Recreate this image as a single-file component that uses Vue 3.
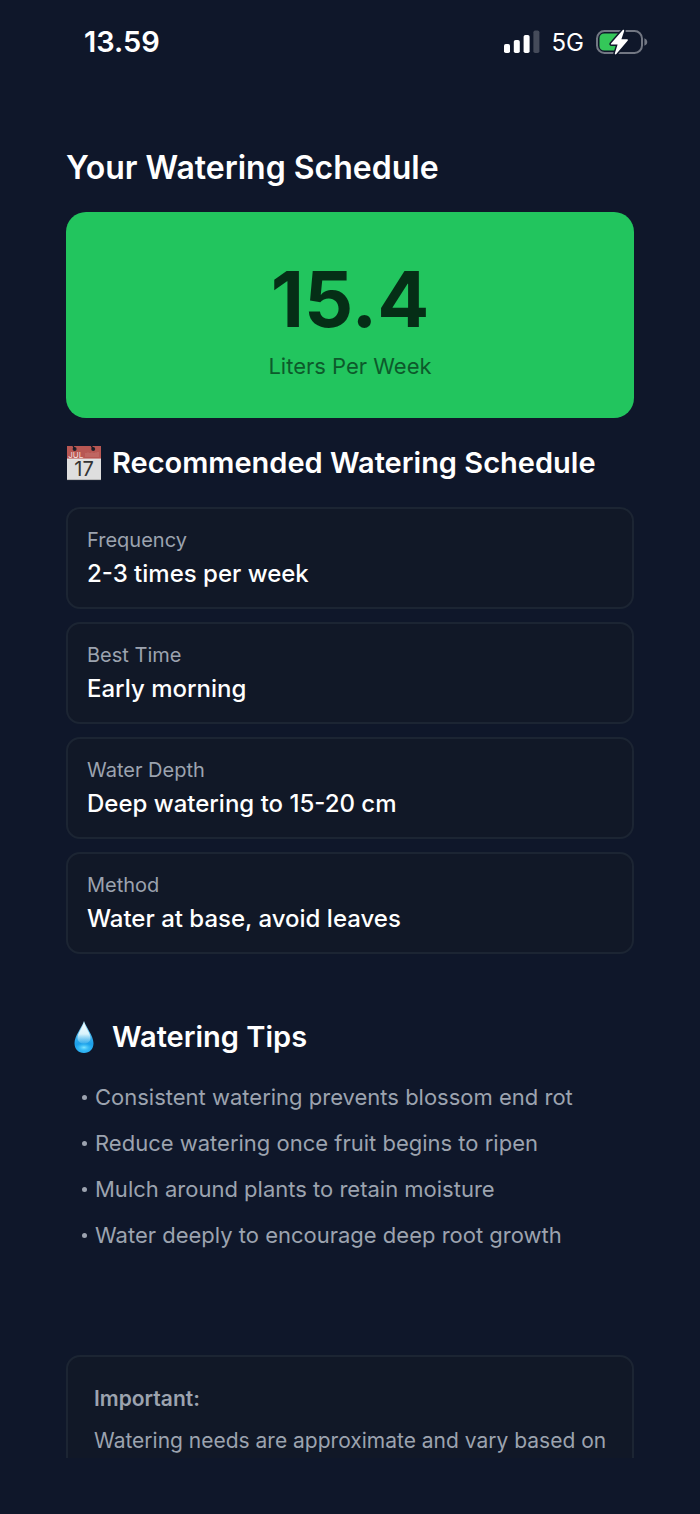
<script setup>
const amount = '15.4'

const schedule = [
  { label: 'Frequency', value: '2-3 times per week' },
  { label: 'Best Time', value: 'Early morning' },
  { label: 'Water Depth', value: 'Deep watering to 15-20 cm' },
  { label: 'Method', value: 'Water at base, avoid leaves' },
]

const tips = [
  'Consistent watering prevents blossom end rot',
  'Reduce watering once fruit begins to ripen',
  'Mulch around plants to retain moisture',
  'Water deeply to encourage deep root growth',
]
</script>

<template>
  <div class="screen">
    <header class="status">
      <time class="clock">13.59</time>
      <div class="indicators">
        <svg class="signal" width="36" height="24" viewBox="0 0 36 24" role="img" aria-label="Signal strength">
          <rect x="0" y="14" width="6" height="9" rx="1.8" fill="#fff" />
          <rect x="9.8" y="10" width="6" height="13" rx="1.8" fill="#fff" />
          <rect x="19.6" y="5" width="6" height="18" rx="1.8" fill="#fff" />
          <rect x="29.4" y="0.5" width="6" height="22.5" rx="1.8" fill="#454b5a" />
        </svg>
        <span class="network">5G</span>
        <svg class="battery" width="52" height="28" viewBox="0 0 52 28" role="img" aria-label="Battery charging">
          <rect x="1" y="3" width="45" height="22" rx="7.5" fill="none" stroke="#727783" stroke-width="2" />
          <path d="M48.4 10.3 C52.2 11.6 52.2 16.6 48.4 17.8 Z" fill="#727783" />
          <path d="M8.5 5.5 H23 V22.5 H8.5 Q3.5 22.5 3.5 17.5 V10.5 Q3.5 5.5 8.5 5.5 Z" fill="#34c759" />
          <path d="M27 1.8 L15 15.4 Q14.4 16.6 15.7 16.6 H21.6 L18.8 25.4 Q19 27 20.3 26 L31.8 12.4 Q32.3 11.2 31 11.2 H25.4 L28.2 3 Q28.2 1.2 27 1.8 Z" fill="#fff" stroke="#0f172a" stroke-width="3" stroke-linejoin="round" paint-order="stroke" />
        </svg>
      </div>
    </header>

    <main class="content">
      <h1>Your Watering Schedule</h1>

      <section class="total">
        <strong class="amount">{{ amount }}</strong>
        <span class="unit">Liters Per Week</span>
      </section>

      <section class="schedule">
        <h2>
          <svg class="emoji" width="36" height="36" viewBox="0 0 36 36" aria-hidden="true">
            <rect x="1" y="1" width="34" height="34" fill="#dedede" />
            <rect x="1" y="1" width="34" height="13" fill="#b85753" />
            <path d="M1 14 H35" stroke="#ececec" stroke-width="0.8" />
            <path d="M1 34.6 H35" stroke="#a9a9a9" stroke-width="0.8" />
            <circle cx="8.6" cy="4" r="2" fill="#20202a" />
            <circle cx="27.2" cy="4" r="2" fill="#20202a" />
            <path d="M8.6 4 L7 0.5 M27.2 4 L25.2 0.5" stroke="#171a26" stroke-width="1.4" />
            <path d="M20 8 V12 M22 7.5 V12 M24 8 V12 M26 7.5 V12 M28 8 V12 M30 7.5 V12 M32 7 V12" stroke="#ca7d79" stroke-width="0.8" />
            <text x="2.3" y="12.8" class="month">JUL</text>
            <text x="18" y="31.4" text-anchor="middle" class="day">17</text>
          </svg>
          <span>Recommended Watering Schedule</span>
        </h2>
        <dl>
          <div v-for="item in schedule" :key="item.label" class="card">
            <dt>{{ item.label }}</dt>
            <dd>{{ item.value }}</dd>
          </div>
        </dl>
      </section>

      <section class="tips">
        <h2>
          <svg class="emoji" width="36" height="36" viewBox="0 0 36 36" aria-hidden="true">
            <defs>
              <linearGradient id="drop-body" x1="0" y1="0" x2="0" y2="1">
                <stop offset="0" stop-color="#b9e7f7" />
                <stop offset="0.4" stop-color="#48b7ed" />
                <stop offset="0.72" stop-color="#1c9fe9" />
                <stop offset="1" stop-color="#2fb4f5" />
              </linearGradient>
              <linearGradient id="drop-shine" x1="0" y1="0" x2="0" y2="1">
                <stop offset="0" stop-color="#f4fdff" />
                <stop offset="0.55" stop-color="#d9f3fb" />
                <stop offset="1" stop-color="#7ccdf2" stop-opacity="0.3" />
              </linearGradient>
              <radialGradient id="drop-glow">
                <stop offset="0" stop-color="#7fe4ff" />
                <stop offset="1" stop-color="#35c8ff" stop-opacity="0" />
              </radialGradient>
            </defs>
            <path d="M18 2 C20 8 27.5 17 27.5 24.2 C27.5 30 23.6 34 18 34 C12.4 34 8.5 30 8.5 24.2 C8.5 17 16 8 18 2 Z" fill="url(#drop-body)" />
            <ellipse cx="18" cy="28.5" rx="8" ry="4.5" fill="url(#drop-glow)" />
            <path d="M18 3.5 C19.5 9 24.5 14 24.5 19 C24.5 22.5 21.5 24.5 18 24.5 C14.5 24.5 11.5 22.5 11.5 19 C11.5 14 16.5 9 18 3.5 Z" fill="url(#drop-shine)" />
          </svg>
          <span>Watering Tips</span>
        </h2>
        <ul>
          <li v-for="tip in tips" :key="tip">{{ tip }}</li>
        </ul>
      </section>

      <aside class="notice">
        <h3>Important:</h3>
        <p>Watering needs are approximate and vary based on</p>
      </aside>
    </main>
  </div>
</template>

<style>
body {
  margin: 0;
  background: #0f172a;
}
</style>

<style scoped>
.screen {
  box-sizing: border-box;
  display: flex;
  flex-direction: column;
  height: 100vh;
  padding-bottom: 56px;
  background: #0f172a;
  color: #fff;
  font-family: Inter, "Liberation Sans", sans-serif;
}

h1, h2, h3, p, dl, dd, ul {
  margin: 0;
  padding: 0;
}

.status {
  display: flex;
  flex: none;
  align-items: center;
  justify-content: space-between;
  height: 84px;
  padding: 0 52px 0 84px;
}

.clock {
  font-size: 29px;
  line-height: 34px;
  font-weight: 600;
}

.indicators {
  display: flex;
  align-items: center;
  gap: 12px;
}

.network {
  padding-top: 2px;
  font-size: 24px;
  line-height: 28px;
}

.content {
  flex: 1;
  min-height: 0;
  overflow: hidden;
  padding: 64px 66px 0;
}

h1 {
  font-size: 32px;
  line-height: 40px;
  font-weight: 600;
}

.total {
  display: flex;
  flex-direction: column;
  align-items: center;
  margin-top: 24px;
  padding: 47px 20px 36px;
  border-radius: 20px;
  background: #22c55e;
  color: #052e16;
}

.amount {
  font-size: 77px;
  line-height: 80px;
  font-weight: 700;
}

.unit {
  margin-top: 11px;
  font-size: 22px;
  line-height: 32px;
  opacity: 0.7;
}

h2 {
  display: flex;
  align-items: center;
  gap: 10px;
  font-size: 29px;
  line-height: 40px;
  font-weight: 600;
}

.emoji {
  flex: none;
}

.month {
  fill: #f3dfde;
  font-size: 8px;
  font-weight: 400;
}

.day {
  fill: #333;
  font-size: 20px;
  font-weight: 400;
}

.schedule {
  margin-top: 25px;
}

dl {
  display: flex;
  flex-direction: column;
  gap: 13px;
  margin-top: 24px;
}

.card {
  padding: 17px 19px 16px;
  border: 2px solid #1c2533;
  border-radius: 14px;
  background: #111827;
}

dt {
  color: #9ca3af;
  font-size: 20px;
  line-height: 28px;
}

dd {
  margin-top: 3px;
  font-size: 24px;
  line-height: 34px;
  font-weight: 500;
}

.tips {
  margin-top: 63px;
}

ul {
  margin-top: 17px;
  list-style: none;
}

li {
  display: flex;
  align-items: center;
  gap: 8px;
  padding-left: 16px;
  color: #9ca3af;
  font-size: 22px;
  line-height: 46px;
}

li::before {
  width: 5px;
  height: 5px;
  border-radius: 50%;
  background: #9ca3af;
  content: "";
}

.notice {
  margin-top: 97px;
  padding: 26px 20px 26px 26px;
  border: 2px solid #1c2533;
  border-radius: 14px;
  background: #111827;
  color: #9ca3af;
}

h3 {
  font-size: 21px;
  line-height: 32px;
  font-weight: 600;
}

p {
  margin-top: 10px;
  font-size: 21px;
  line-height: 32px;
}
</style>
